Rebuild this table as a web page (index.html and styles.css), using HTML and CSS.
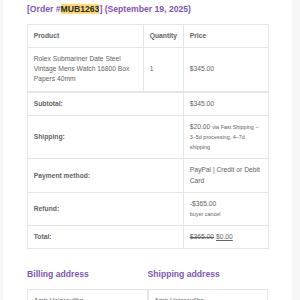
FILE: index.html
```html
<!DOCTYPE html>
<html>
<head>
<meta charset="utf-8">
<link rel="stylesheet" href="styles.css">
</head>
<body>
<div class="email">
  <h2 class="title">[Order #<mark class="hl">MUB1263</mark>] (September 19, 2025)</h2>
  <table class="order">
    <colgroup>
      <col class="w-prod">
      <col class="w-qty">
      <col class="w-price">
    </colgroup>
    <thead>
      <tr>
        <th>Product</th>
        <th>Quantity</th>
        <th>Price</th>
      </tr>
    </thead>
    <tbody>
      <tr>
        <td>Rolex Submariner Date Steel Vintage Mens Watch 16800 Box Papers 40mm</td>
        <td>1</td>
        <td>$345.00</td>
      </tr>
    </tbody>
    <tfoot>
      <tr class="first">
        <th colspan="2">Subtotal:</th>
        <td>$345.00</td>
      </tr>
      <tr>
        <th colspan="2">Shipping:</th>
        <td>$20.00&nbsp;<small>via Fast Shipping – 3–5d processing, 4–7d shipping</small></td>
      </tr>
      <tr>
        <th colspan="2">Payment method:</th>
        <td>PayPal | Credit or Debit Card</td>
      </tr>
      <tr>
        <th colspan="2">Refund:</th>
        <td>-$365.00<br><small>buyer cancel</small></td>
      </tr>
      <tr>
        <th colspan="2">Total:</th>
        <td><del>$365.00</del> <ins>$0.00</ins></td>
      </tr>
    </tfoot>
  </table>
  <div class="addresses">
    <div class="addr-col">
      <h2 class="addr-title">Billing address</h2>
      <address class="addr">Amir Hajarouliha</address>
    </div>
    <div class="addr-col">
      <h2 class="addr-title">Shipping address</h2>
      <address class="addr">Amir Hajarouliha</address>
    </div>
  </div>
</div>
</body>
</html>
```

FILE: styles.css
```css
html, body {
  margin: 0;
  padding: 0;
  background: #f7f7f7;
  height: 100%;
  overflow: hidden;
}
body {
  font-family: "Liberation Sans", Arial, sans-serif;
  color: #636363;
}
.email {
  margin-left: 3px;
  width: 289px;
  min-height: 100%;
  background: #ffffff;
  padding: 4px 24px 0;
  box-sizing: border-box;
}
.title {
  margin: 0 0 8.6px;
  font-size: 8.64px;
  line-height: 11.2px;
  font-weight: bold;
  color: #7f54b3;
}
.hl {
  background: #fbd872;
  color: #2b2b2b;
}
.order {
  width: 241px;
  table-layout: fixed;
  border-collapse: collapse;
  border: 1px solid #e5e5e5;
  font-size: 6.72px;
  line-height: 10.15px;
  color: #636363;
  margin-bottom: 20px;
}
.w-prod { width: 116px; }
.w-qty { width: 40px; }
.w-price { width: 85px; }
.order th,
.order td {
  border: 1px solid #e5e5e5;
  padding: 6.05px 5.76px;
  text-align: left;
  vertical-align: middle;
}
.order th {
  font-weight: bold;
}
.order tfoot tr.first th,
.order tfoot tr.first td {
  border-top-width: 2px;
}
.order small {
  font-size: 5.45px;
}
.order del {
  color: #636363;
}
.order ins {
  text-decoration: underline;
}
.addresses {
  display: flex;
  width: 241px;
}
.addr-col {
  flex: 1 1 0;
  min-width: 0;
}
.addr-title {
  margin: 0 0 8.6px;
  font-size: 8.64px;
  line-height: 11.2px;
  font-weight: bold;
  color: #7f54b3;
}
.addr {
  font-style: normal;
  font-size: 6.72px;
  line-height: 10.15px;
  padding: 6.05px 5.76px;
  border: 1px solid #e5e5e5;
  color: #636363;
}
```
